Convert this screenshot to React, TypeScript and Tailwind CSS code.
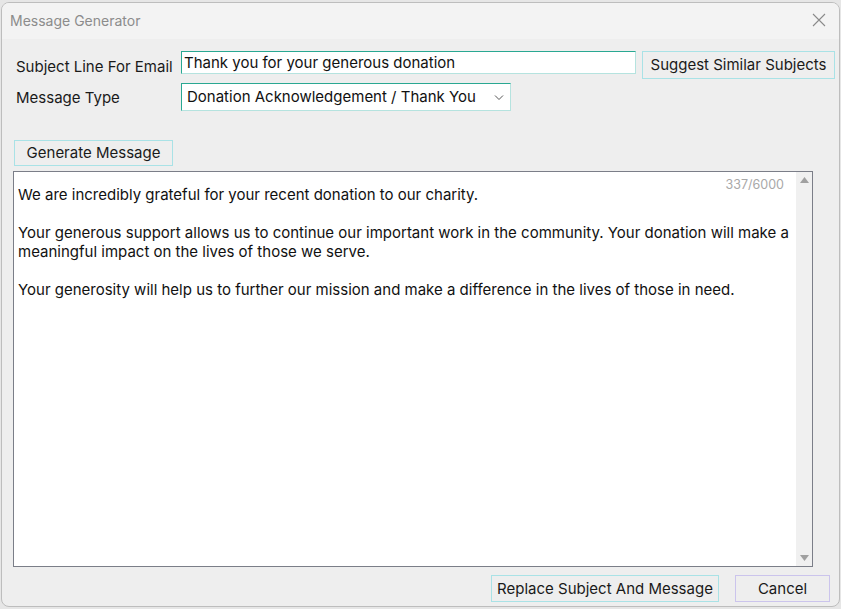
import React from "react";

const text1 = "We are incredibly grateful for your recent donation to our charity.";
const text2 =
  "Your generous support allows us to continue our important work in the community. Your donation will make a meaningful impact on the lives of those we serve.";
const text3 =
  "Your generosity will help us to further our mission and make a difference in the lives of those in need.";

export default function App() {
  return (
    <div
      className="w-[841px] h-[609px] bg-[#e6e6e6] pt-[2px] pl-[1px] overflow-hidden"
      style={{ fontFamily: "Inter, 'Noto Sans', sans-serif" }}
    >
      <div className="w-[839px] h-[605px] rounded-[8px] border border-[#bdbdbd] bg-[#eeeeee] overflow-hidden flex flex-col">
        {/* title bar */}
        <div className="h-[36px] bg-[#f3f3f3] flex items-center justify-between pl-[8px] pr-[12px] pb-[2px] shrink-0">
          <span className="text-[14px] text-[#8c8c8c]">Message Generator</span>
          <svg width="14" height="14" viewBox="0 0 14 14" className="mr-[1px]">
            <path d="M1 1 L13 13 M13 1 L1 13" stroke="#8a8a8a" strokeWidth="1.1" fill="none" />
          </svg>
        </div>

        {/* body */}
        <div className="flex-1 flex flex-col pl-[10px] pr-[4px] text-[15px]">
          <div className="flex items-start mt-[12px]">
            <div className="w-[169px] pl-[4px] pt-[5px] text-[#1a1a1a]">Subject Line For Email</div>
            <div className="w-[455px] h-[23px] bg-white border-t border-l border-[#29a892] border-r-[#b5e3df] border-b-[#b5e3df] border-r border-b flex items-center pl-[2px] pt-[1px] text-[#111]">
              Thank you for your generous donation
            </div>
            <button className="ml-[6px] w-[193px] h-[28px] border border-[#a9e2e6] bg-[#eeeeee] text-[#1a1a1a] pt-[1px]">
              Suggest Similar Subjects
            </button>
          </div>
          <div className="flex items-center mt-[4px]">
            <div className="w-[169px] pl-[4px] pt-[2px] text-[#1a1a1a]">Message Type</div>
            <div className="w-[330px] h-[28px] bg-white border-t border-l border-[#29a892] border-r-[#b5e3df] border-b-[#b5e3df] border-r border-b flex items-center justify-between pl-[5px] pr-[6px] pt-[1px] text-[#111]">
              <span>Donation Acknowledgement / Thank You</span>
              <svg width="10" height="6" viewBox="0 0 10 6">
                <path d="M1 0.5 L5 4.5 L9 0.5" stroke="#555" strokeWidth="1" fill="none" />
              </svg>
            </div>
          </div>

          <button className="mt-[29px] ml-[2px] w-[159px] h-[26px] border border-[#a9e2e6] bg-[#eeeeee] text-[#1a1a1a] pt-[1px]">
            Generate Message
          </button>

          <div className="mt-[5px] ml-[1px] w-[800px] h-[396px] border border-[#7b7e88] bg-white flex">
            <div className="flex-1 relative pl-[4px] pt-[13px] pr-[2px] leading-[19px] text-[#111]">
              <div className="absolute right-[12px] top-[3px] text-[12.5px] text-[#a8a8a8]">337/6000</div>
              <p>{text1}</p>
              <p className="mt-[19px]">{text2}</p>
              <p className="mt-[19px]">{text3}</p>
            </div>
            <div className="w-[16px] bg-[#f0f0f0] flex flex-col justify-between items-center py-[5px]">
              <svg width="9" height="6" viewBox="0 0 9 6">
                <path d="M4.5 0 L9 6 L0 6 Z" fill="#a0a0a0" />
              </svg>
              <svg width="9" height="6" viewBox="0 0 9 6">
                <path d="M0 0 L9 0 L4.5 6 Z" fill="#a0a0a0" />
              </svg>
            </div>
          </div>

          <div className="flex justify-end mt-[8px] pr-[5px] gap-[16px]">
            <button className="w-[228px] h-[27px] border border-[#a9e2e6] bg-[#eeeeee] text-[#1a1a1a] pt-[1px]">
              Replace Subject And Message
            </button>
            <button className="w-[95px] h-[27px] border border-[#cbc4ec] bg-[#eeeeee] text-[#1a1a1a] pt-[1px]">
              Cancel
            </button>
          </div>
        </div>
      </div>
    </div>
  );
}
